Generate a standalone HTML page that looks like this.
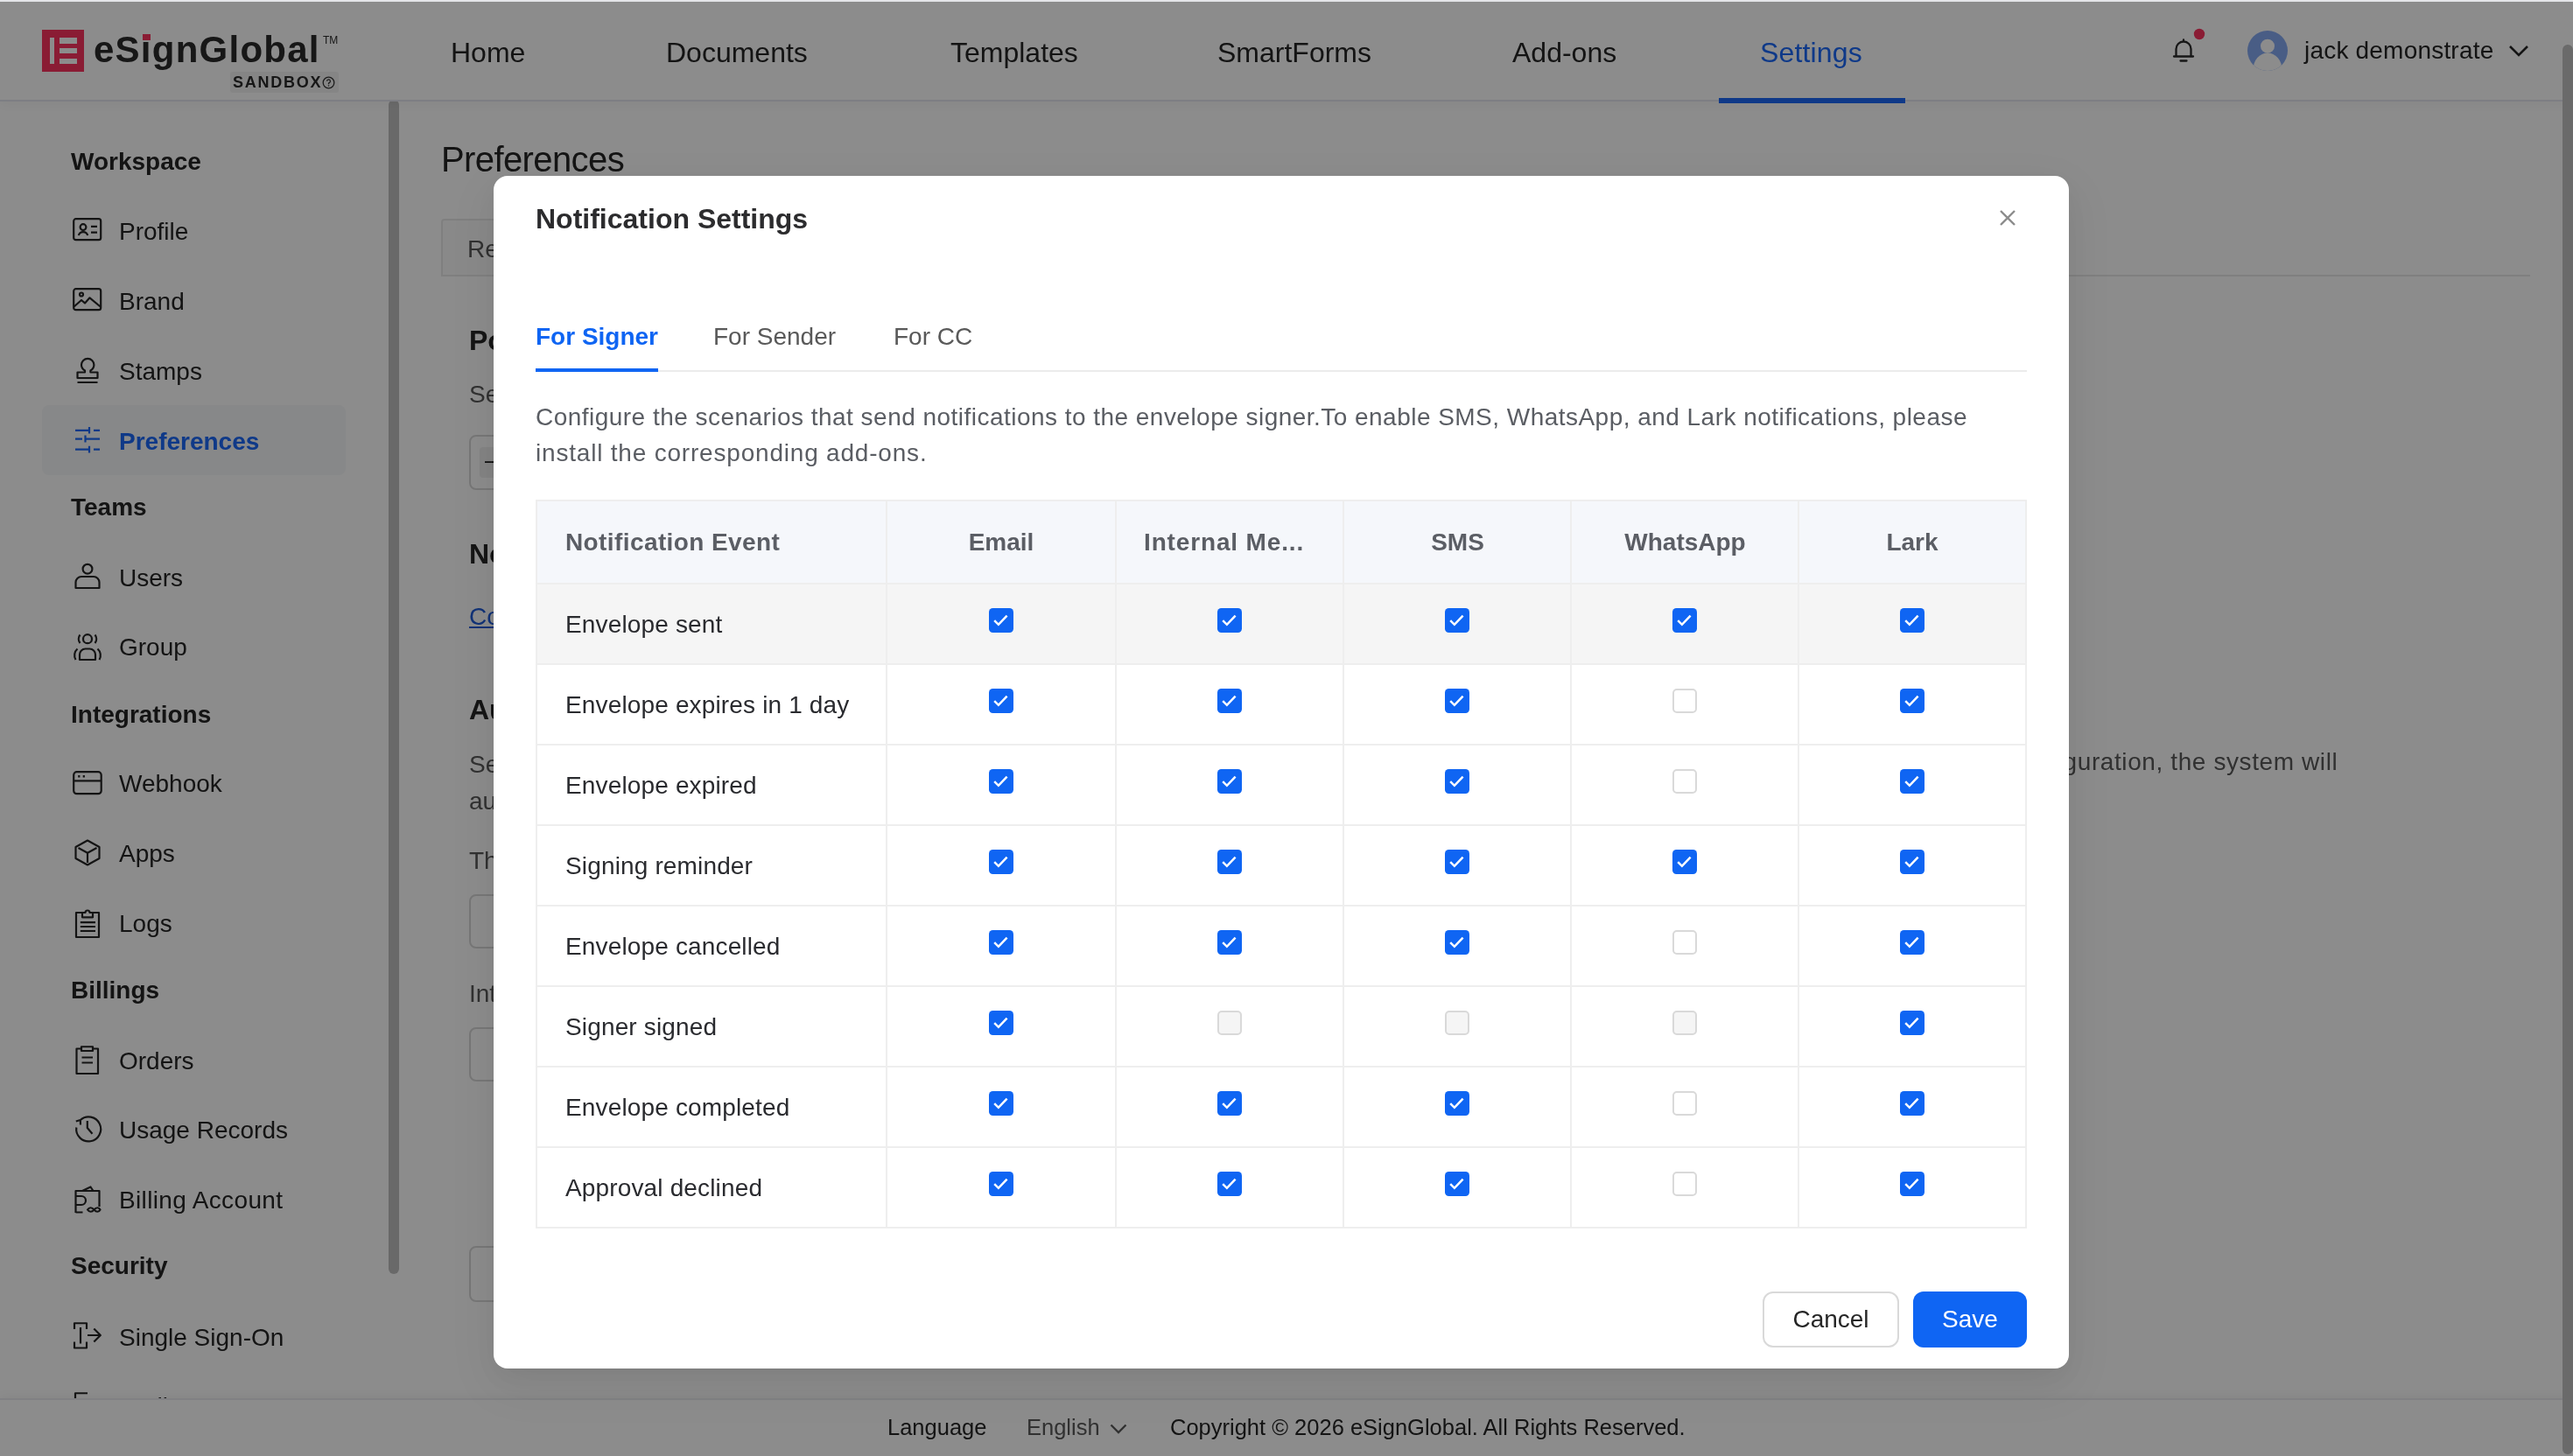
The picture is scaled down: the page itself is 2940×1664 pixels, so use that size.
<!DOCTYPE html><html><head><meta charset="utf-8"><style>
html,body{margin:0;padding:0;}
body{width:2940px;height:1664px;overflow:hidden;position:relative;background:#fff;font-family:"Liberation Sans",sans-serif;}
.t{position:absolute;line-height:1;white-space:nowrap;will-change:transform;}
.r{position:absolute;}
svg{position:absolute;overflow:visible;}
</style></head><body>
<div class="r" style="left:0px;top:0px;width:2940px;height:114px;background:#fff;box-shadow:0 2px 0 #e4e6ee, 0 4px 12px rgba(0,0,0,0.05);z-index:2;"></div>
<div style="position:absolute;left:0;top:0;width:2940px;height:120px;z-index:3;">
<div class="r" style="left:48px;top:34px;width:48px;height:48px;background:#fb3360;"></div>
<div class="r" style="left:57px;top:43px;width:5px;height:30px;background:#fff;"></div>
<div class="r" style="left:68px;top:43px;width:20px;height:6.5px;background:#fff;"></div>
<div class="r" style="left:68px;top:55px;width:20px;height:6px;background:#fff;"></div>
<div class="r" style="left:68px;top:66.5px;width:20px;height:6.5px;background:#fff;"></div>
<div class="t " style="left:107.0px;top:35.7px;font-size:42px;color:#2a2a2a;font-weight:700;letter-spacing:1.25px;">eS&#305;gnGlobal</div>
<div class="r" style="left:163px;top:38.7px;width:9px;height:7.3px;background:#fb3360;"></div>
<div class="t " style="left:369.0px;top:39.8px;font-size:12px;color:#2a2a2a;">TM</div>
<div class="r" style="left:263px;top:82px;width:124px;height:24px;background:#f3f3f3;border-radius:3px;"></div>
<div class="t " style="left:265.5px;top:85.3px;font-size:18px;color:#2a2a2a;font-weight:700;letter-spacing:1.75px;">SANDBOX</div>
<svg style="left:368px;top:87px" width="15" height="15" viewBox="0 0 15 15"><circle cx="7.5" cy="7.5" r="6.3" fill="none" stroke="#333" stroke-width="1.3"/><path d="M5.6 5.8a1.9 1.9 0 1 1 2.6 1.8c-.5.2-.7.5-.7 1v.6" fill="none" stroke="#333" stroke-width="1.3"/><circle cx="7.5" cy="11" r=".8" fill="#333"/></svg>
<div class="t " style="left:515.0px;top:44.3px;font-size:32px;color:#262626;">Home</div>
<div class="t " style="left:761.0px;top:44.3px;font-size:32px;color:#262626;">Documents</div>
<div class="t " style="left:1085.5px;top:44.3px;font-size:32px;color:#262626;">Templates</div>
<div class="t " style="left:1390.5px;top:44.3px;font-size:32px;color:#262626;">SmartForms</div>
<div class="t " style="left:1728.0px;top:44.3px;font-size:32px;color:#262626;">Add-ons</div>
<div class="t " style="left:2011.0px;top:44.3px;font-size:32px;color:#1c69f8;letter-spacing:0.15px;">Settings</div>
<div class="r" style="left:1964px;top:112px;width:213px;height:6px;background:#1c69f8;"></div>
<svg style="left:2483px;top:44px" width="24" height="28" viewBox="0 0 24 28"><path d="M3.5 20.5 V12 a8.5 8.5 0 0 1 17 0 V20.5 M1 20.5 H23 M12 1.5 V3.5 M8.5 25.5 H15.5" fill="none" stroke="#2b2b2b" stroke-width="2.3" stroke-linecap="round"/></svg>
<svg style="left:2506px;top:32px" width="14" height="14"><circle cx="7" cy="7" r="6.2" fill="#fb3360"/></svg>
<svg style="left:2567px;top:34px" width="48" height="48" viewBox="0 0 48 48"><defs><clipPath id="av"><circle cx="24" cy="24" r="23"/></clipPath></defs><circle cx="24" cy="24" r="23" fill="#86aaf2"/><g clip-path="url(#av)"><circle cx="24" cy="18.7" r="8" fill="#fff"/><ellipse cx="24" cy="45.5" rx="16.5" ry="19" fill="#fff"/></g></svg>
<div class="t " style="left:2632.5px;top:44.3px;font-size:28px;color:#262626;letter-spacing:0.2px;">jack demonstrate</div>
<svg style="left:2866px;top:50px" width="24" height="16"><path d="M2 3 L12 13 L22 3" fill="none" stroke="#262626" stroke-width="2.6"/></svg>
</div>
<div class="r" style="left:48px;top:463px;width:347px;height:80px;background:#f6f7f9;border-radius:8px;"></div>
<div class="t " style="left:80.5px;top:170.8px;font-size:28px;color:#262626;font-weight:700;">Workspace</div>
<div class="t " style="left:80.5px;top:566.3px;font-size:28px;color:#262626;font-weight:700;">Teams</div>
<div class="t " style="left:80.5px;top:802.8px;font-size:28px;color:#262626;font-weight:700;">Integrations</div>
<div class="t " style="left:80.5px;top:1118.3px;font-size:28px;color:#262626;font-weight:700;">Billings</div>
<div class="t " style="left:80.5px;top:1433.3px;font-size:28px;color:#262626;font-weight:700;">Security</div>
<svg style="left:83px;top:249px" width="36" height="36" viewBox="0 0 36 36"><g fill="none" stroke="#262626" stroke-width="2.2" stroke-linejoin="round"><rect x="1.2" y="1.2" width="31" height="24" rx="2.5"/><circle cx="12" cy="10.6" r="3.4"/><path d="M6.8 20 a5.4 5.4 0 0 1 10.4 0 M21 9.8 H28 M21 16.6 H28"/></g></svg>
<div class="t " style="left:135.5px;top:251.3px;font-size:28px;color:#262626;">Profile</div>
<svg style="left:83px;top:329px" width="36" height="36" viewBox="0 0 36 36"><g fill="none" stroke="#262626" stroke-width="2.2" stroke-linejoin="round"><rect x="1.2" y="1.2" width="31" height="24" rx="2.5"/><circle cx="10" cy="7.5" r="2"/><path d="M1.5 21.5 L10 14 L14 17.4 L19.5 11.3 L32.3 22"/></g></svg>
<div class="t " style="left:135.5px;top:331.3px;font-size:28px;color:#262626;">Brand</div>
<svg style="left:85px;top:408px" width="36" height="36" viewBox="0 0 36 36"><g fill="none" stroke="#262626" stroke-width="2.2" stroke-linejoin="round"><path d="M12 15.5 C9.2 13.8 8 11.5 8 9 a7.2 7.2 0 0 1 14.4 0 c0 2.5 -1.2 4.8 -4 6.5 V17.5 H26.5 V24 H3.5 V17.5 H12 Z M3.5 29 H26.5"/></g></svg>
<div class="t " style="left:135.5px;top:411.3px;font-size:28px;color:#262626;">Stamps</div>
<svg style="left:85px;top:488px" width="36" height="36" viewBox="0 0 36 36"><g fill="none" stroke="#1c69f8" stroke-width="2.2" stroke-linejoin="round"><path d="M1 3.8 H17 M22 3.8 H29 M17 0 V7.6 M1 13.6 H9 M12.5 13.6 H29 M12.5 9.6 V17.6 M1 25.6 H17 M22 25.6 H29 M17 21.8 V29.4"/></g></svg>
<div class="t " style="left:135.5px;top:491.3px;font-size:28px;color:#1c69f8;font-weight:700;">Preferences</div>
<svg style="left:85px;top:644px" width="36" height="36" viewBox="0 0 36 36"><g fill="none" stroke="#262626" stroke-width="2.2" stroke-linejoin="round"><circle cx="15" cy="6.2" r="5.4"/><path d="M1.5 28 V21.5 a6.5 6.5 0 0 1 6.5 -6.5 H22 a6.5 6.5 0 0 1 6.5 6.5 V28 Z"/></g></svg>
<div class="t " style="left:135.5px;top:647.3px;font-size:28px;color:#262626;">Users</div>
<svg style="left:85px;top:724px" width="36" height="36" viewBox="0 0 36 36"><g fill="none" stroke="#262626" stroke-width="2.2" stroke-linejoin="round"><circle cx="15" cy="6.2" r="5"/><path d="M6.5 1.5 a7.5 7.5 0 0 0 0 9.5 M23.5 1.5 a7.5 7.5 0 0 1 0 9.5 M6 30 V24 a6.5 6.5 0 0 1 6.5 -6.5 H17.5 a6.5 6.5 0 0 1 6.5 6.5 V30 Z M3.5 17.5 a10 10 0 0 0 -2 12.5 M26.5 17.5 a10 10 0 0 1 2 12.5"/></g></svg>
<div class="t " style="left:135.5px;top:726.3px;font-size:28px;color:#262626;">Group</div>
<svg style="left:83px;top:881px" width="36" height="36" viewBox="0 0 36 36"><g fill="none" stroke="#262626" stroke-width="2.2" stroke-linejoin="round"><rect x="1.2" y="1.2" width="31.5" height="25" rx="3.5"/><path d="M1.5 11.4 H32.5"/><path d="M6.2 6.2 H8.4 M11.7 6.2 H13.9" stroke-width="2.6"/></g></svg>
<div class="t " style="left:135.5px;top:882.3px;font-size:28px;color:#262626;">Webhook</div>
<svg style="left:85px;top:959px" width="36" height="36" viewBox="0 0 36 36"><g fill="none" stroke="#262626" stroke-width="2.2" stroke-linejoin="round"><path d="M15 1.5 L28.5 9 V22 L15 29.5 L1.5 22 V9 Z M4.5 10 L15 15.8 L25.5 10 M15 15.8 V27"/></g></svg>
<div class="t " style="left:135.5px;top:962.3px;font-size:28px;color:#262626;">Apps</div>
<svg style="left:85px;top:1037px" width="36" height="36" viewBox="0 0 36 36"><g fill="none" stroke="#262626" stroke-width="2.2" stroke-linejoin="round"><path d="M8.5 6 H2 V34 H28 V6 H21.5 M9 11.3 V6 H12.5 a2.5 2.5 0 0 1 5 0 H21 V11.3 Z"/><path d="M6.8 17.2 H24 M6.8 22 H24 M6.8 27 H24"/></g></svg>
<div class="t " style="left:135.5px;top:1042.3px;font-size:28px;color:#262626;">Logs</div>
<svg style="left:86px;top:1195px" width="36" height="36" viewBox="0 0 36 36"><g fill="none" stroke="#262626" stroke-width="2.2" stroke-linejoin="round"><path d="M7 3.5 H1.5 V32 H26 V3.5 H20.5 M7 1.25 V6 H20 V1.25 Z M7.5 13.5 H20 M7.5 19.5 H20"/></g></svg>
<div class="t " style="left:135.5px;top:1198.8px;font-size:28px;color:#262626;">Orders</div>
<svg style="left:85px;top:1276px" width="36" height="36" viewBox="0 0 36 36"><g fill="none" stroke="#262626" stroke-width="2.2" stroke-linejoin="round"><path d="M2.3 12.5 a14 14 0 1 0 4.5 -8.5 M1.8 5.5 L6.8 4 L7 9.5 M14.8 5 V13 L20.5 19.8"/></g></svg>
<div class="t " style="left:135.5px;top:1278.3px;font-size:28px;color:#262626;">Usage Records</div>
<svg style="left:85px;top:1355px" width="36" height="36" viewBox="0 0 36 36"><g fill="none" stroke="#262626" stroke-width="2.2" stroke-linejoin="round"><path d="M28.5 24 V6 H9 M1.5 31 V6 H9 L18.5 1.5 L21.5 6 M1.5 12 H8 a5 5 0 0 1 0 10 H1.5 M1.5 30.5 H9.5 M15 27.5 c2 -3 5 -3 7.5 0 c2.5 3 5.5 3 7 0 c-1.5 -3 -4.5 -3 -7 0 c-2.5 3 -5.5 3 -7.5 0 Z"/></g></svg>
<div class="t " style="left:135.5px;top:1358.3px;font-size:28px;color:#262626;letter-spacing:0.35px;">Billing Account</div>
<svg style="left:85px;top:1511px" width="36" height="36" viewBox="0 0 36 36"><g fill="none" stroke="#262626" stroke-width="2.2" stroke-linejoin="round"><path d="M0 8 V1.25 H14 V8 M0 22.5 V29.5 H14 V22.5 M7 6 V24.5 M15 15 H29.5 M22.3 7.5 L29.8 15 L22.3 22.5"/></g></svg>
<div class="t " style="left:135.5px;top:1514.9px;font-size:28px;color:#262626;">Single Sign-On</div>
<svg style="left:85px;top:1591px" width="36" height="36" viewBox="0 0 36 36"><g fill="none" stroke="#262626" stroke-width="2.2" stroke-linejoin="round"><path d="M1 8 V1.25 H15"/></g></svg>
<div class="t " style="left:135.5px;top:1594.3px;font-size:28px;color:#262626;">Audit Logs</div>
<div class="r" style="left:444px;top:114px;width:12px;height:1342px;background:#c0c0c0;border-radius:6px;"></div>
<div class="t " style="left:504.0px;top:162.1px;font-size:40px;color:#262626;letter-spacing:-0.6px;">Preferences</div>
<div class="r" style="left:504px;top:250px;width:400px;height:66px;background:#fafafa;border:2px solid #e8e8e8;border-bottom:none;border-radius:4px 4px 0 0;box-sizing:border-box;"></div>
<div class="r" style="left:504px;top:314px;width:2387px;height:2px;background:#e8e8e8;"></div>
<div class="t " style="left:534.0px;top:271.0px;font-size:28px;color:#595959;">Reminders</div>
<div class="t " style="left:536.0px;top:373.3px;font-size:32px;color:#262626;font-weight:700;">Policies</div>
<div class="t " style="left:536.0px;top:436.6px;font-size:28px;color:#595959;">Set policies</div>
<div class="r" style="left:536px;top:497px;width:600px;height:63px;background:#fff;border:2px solid #d9d9d9;border-radius:8px;box-sizing:border-box;"></div>
<div class="r" style="left:548px;top:511px;width:120px;height:35px;background:#f0f0f0;border-radius:4px;"></div>
<div class="t " style="left:554.0px;top:512.3px;font-size:28px;color:#262626;">&#8211;</div>
<div class="t " style="left:536.0px;top:616.9px;font-size:32px;color:#262626;font-weight:700;">Notifications</div>
<div class="t " style="left:536.0px;top:691.3px;font-size:28px;color:#1f5bd8;text-decoration:underline;">Configure</div>
<div class="t " style="left:536.0px;top:794.6px;font-size:32px;color:#262626;font-weight:700;">Auto reminders</div>
<div class="t " style="left:536.0px;top:860.0px;font-size:28px;color:#595959;">Set</div>
<div class="t" style="right:269px;top:857.3px;font-size:28px;color:#595959;letter-spacing:0.6px;">After completing the configuration, the system will</div>
<div class="t " style="left:536.0px;top:902.3px;font-size:28px;color:#595959;">automatically</div>
<div class="t " style="left:536.0px;top:969.8px;font-size:28px;color:#595959;">The</div>
<div class="r" style="left:536px;top:1022px;width:600px;height:62px;background:#fff;border:2px solid #d9d9d9;border-radius:8px;box-sizing:border-box;"></div>
<div class="t " style="left:536.0px;top:1121.9px;font-size:28px;color:#595959;">Interval</div>
<div class="r" style="left:536px;top:1174px;width:600px;height:62px;background:#fff;border:2px solid #d9d9d9;border-radius:8px;box-sizing:border-box;"></div>
<div class="r" style="left:536px;top:1424px;width:600px;height:64px;background:#fff;border:2px solid #d9d9d9;border-radius:8px;box-sizing:border-box;"></div>
<div class="r" style="left:0px;top:1600px;width:2940px;height:64px;background:#fff;box-shadow:0 -2px 0 #e9eaee, 0 -4px 10px rgba(0,0,0,0.05);z-index:4;"></div>
<div style="position:absolute;left:0;top:1590px;width:2940px;height:74px;z-index:5;">
<div class="t " style="left:1013.5px;top:29.4px;font-size:25.5px;color:#262626;">Language</div>
<div class="t " style="left:1172.5px;top:29.4px;font-size:25.5px;color:#595959;">English</div>
<svg style="left:1268px;top:37px" width="20" height="12"><path d="M1.5 1.5 L10 10 L18.5 1.5" fill="none" stroke="#595959" stroke-width="2.3"/></svg>
<div class="t " style="left:1336.5px;top:29.4px;font-size:25.5px;color:#262626;">Copyright &#169; 2026 eSignGlobal. All Rights Reserved.</div>
</div>
<div class="r" style="left:0px;top:0px;width:2940px;height:1664px;background:rgba(0,0,0,0.45);z-index:10;"></div>
<div class="r" style="left:0px;top:0px;width:2940px;height:2px;background:#e4e5e8;z-index:11;"></div>
<div class="r" style="left:2928px;top:51px;width:12px;height:1611px;background:#6a6a6a;border-radius:6px;z-index:11;"></div>
<div style="position:absolute;left:564px;top:201px;width:1800px;height:1363px;background:#fff;border-radius:16px;z-index:20;box-shadow:0 12px 32px rgba(0,0,0,.05),0 6px 12px -8px rgba(0,0,0,.06),0 18px 56px 16px rgba(0,0,0,.05);"></div>
<div style="position:absolute;left:0;top:0;width:2940px;height:1664px;z-index:21;">
<div class="t " style="left:612.0px;top:233.6px;font-size:32px;color:#2c2c2e;font-weight:700;">Notification Settings</div>
<svg style="left:2285px;top:240px" width="18" height="18"><path d="M1 1 L17 17 M17 1 L1 17" stroke="#8c8c8c" stroke-width="2.4"/></svg>
<div class="t " style="left:612.0px;top:370.9px;font-size:28px;color:#0f65f3;font-weight:700;">For Signer</div>
<div class="t " style="left:815.0px;top:370.9px;font-size:28px;color:#595959;">For Sender</div>
<div class="t " style="left:1021.0px;top:370.9px;font-size:28px;color:#595959;">For CC</div>
<div class="r" style="left:612px;top:423px;width:1704px;height:2px;background:#ececec;"></div>
<div class="r" style="left:612px;top:421px;width:140px;height:4px;background:#0f65f3;"></div>
<div class="t " style="left:612.0px;top:462.9px;font-size:28px;color:#5a5d63;letter-spacing:0.47px;">Configure the scenarios that send notifications to the envelope signer.To enable SMS, WhatsApp, and Lark notifications, please</div>
<div class="t " style="left:612.0px;top:504.3px;font-size:28px;color:#5a5d63;letter-spacing:0.8px;">install the corresponding add-ons.</div>
<div class="r" style="left:614px;top:573px;width:1700px;height:93px;background:#f5f7fb;"></div>
<div class="r" style="left:614px;top:668px;width:1700px;height:90px;background:#f5f5f5;"></div>
<div class="r" style="left:612px;top:571px;width:1704px;height:2px;background:#eeeeee;"></div>
<div class="r" style="left:612px;top:666px;width:1704px;height:2px;background:#eeeeee;"></div>
<div class="r" style="left:612px;top:758px;width:1704px;height:2px;background:#eeeeee;"></div>
<div class="r" style="left:612px;top:850px;width:1704px;height:2px;background:#eeeeee;"></div>
<div class="r" style="left:612px;top:942px;width:1704px;height:2px;background:#eeeeee;"></div>
<div class="r" style="left:612px;top:1034px;width:1704px;height:2px;background:#eeeeee;"></div>
<div class="r" style="left:612px;top:1126px;width:1704px;height:2px;background:#eeeeee;"></div>
<div class="r" style="left:612px;top:1218px;width:1704px;height:2px;background:#eeeeee;"></div>
<div class="r" style="left:612px;top:1310px;width:1704px;height:2px;background:#eeeeee;"></div>
<div class="r" style="left:612px;top:1402px;width:1704px;height:2px;background:#eeeeee;"></div>
<div class="r" style="left:612px;top:571px;width:2px;height:833px;background:#eeeeee;"></div>
<div class="r" style="left:1012px;top:571px;width:2px;height:833px;background:#eeeeee;"></div>
<div class="r" style="left:1274px;top:571px;width:2px;height:833px;background:#eeeeee;"></div>
<div class="r" style="left:1534px;top:571px;width:2px;height:833px;background:#eeeeee;"></div>
<div class="r" style="left:1794px;top:571px;width:2px;height:833px;background:#eeeeee;"></div>
<div class="r" style="left:2054px;top:571px;width:2px;height:833px;background:#eeeeee;"></div>
<div class="r" style="left:2314px;top:571px;width:2px;height:833px;background:#eeeeee;"></div>
<div class="t " style="left:646.0px;top:606.2px;font-size:28px;color:#5b5e65;font-weight:700;letter-spacing:0.4px;">Notification Event</div>
<div class="t" style="left:1014px;width:260px;text-align:center;top:606.2px;font-size:28px;font-weight:700;color:#5b5e65;">Email</div>
<div class="t " style="left:1307.0px;top:606.2px;font-size:28px;color:#5b5e65;font-weight:700;letter-spacing:0.85px;">Internal Me...</div>
<div class="t" style="left:1536px;width:259px;text-align:center;top:606.2px;font-size:28px;font-weight:700;color:#5b5e65;">SMS</div>
<div class="t" style="left:1797px;width:257px;text-align:center;top:606.2px;font-size:28px;font-weight:700;color:#5b5e65;">WhatsApp</div>
<div class="t" style="left:2056px;width:258px;text-align:center;top:606.2px;font-size:28px;font-weight:700;color:#5b5e65;">Lark</div>
<div class="t " style="left:646.0px;top:699.6px;font-size:28px;color:#2a2b2f;letter-spacing:0.15px;">Envelope sent</div>
<svg style="left:1130px;top:695px" width="28" height="28" viewBox="0 0 28 28"><rect x="0" y="0" width="28" height="28" rx="4.5" fill="#0f65f3"/><path d="M6.2 14.1 L10.9 18.8 L20.6 8.6" fill="none" stroke="#fff" stroke-width="2.5"/></svg>
<svg style="left:1391px;top:695px" width="28" height="28" viewBox="0 0 28 28"><rect x="0" y="0" width="28" height="28" rx="4.5" fill="#0f65f3"/><path d="M6.2 14.1 L10.9 18.8 L20.6 8.6" fill="none" stroke="#fff" stroke-width="2.5"/></svg>
<svg style="left:1651px;top:695px" width="28" height="28" viewBox="0 0 28 28"><rect x="0" y="0" width="28" height="28" rx="4.5" fill="#0f65f3"/><path d="M6.2 14.1 L10.9 18.8 L20.6 8.6" fill="none" stroke="#fff" stroke-width="2.5"/></svg>
<svg style="left:1911px;top:695px" width="28" height="28" viewBox="0 0 28 28"><rect x="0" y="0" width="28" height="28" rx="4.5" fill="#0f65f3"/><path d="M6.2 14.1 L10.9 18.8 L20.6 8.6" fill="none" stroke="#fff" stroke-width="2.5"/></svg>
<svg style="left:2171px;top:695px" width="28" height="28" viewBox="0 0 28 28"><rect x="0" y="0" width="28" height="28" rx="4.5" fill="#0f65f3"/><path d="M6.2 14.1 L10.9 18.8 L20.6 8.6" fill="none" stroke="#fff" stroke-width="2.5"/></svg>
<div class="t " style="left:646.0px;top:791.6px;font-size:28px;color:#2a2b2f;letter-spacing:0.15px;">Envelope expires in 1 day</div>
<svg style="left:1130px;top:787px" width="28" height="28" viewBox="0 0 28 28"><rect x="0" y="0" width="28" height="28" rx="4.5" fill="#0f65f3"/><path d="M6.2 14.1 L10.9 18.8 L20.6 8.6" fill="none" stroke="#fff" stroke-width="2.5"/></svg>
<svg style="left:1391px;top:787px" width="28" height="28" viewBox="0 0 28 28"><rect x="0" y="0" width="28" height="28" rx="4.5" fill="#0f65f3"/><path d="M6.2 14.1 L10.9 18.8 L20.6 8.6" fill="none" stroke="#fff" stroke-width="2.5"/></svg>
<svg style="left:1651px;top:787px" width="28" height="28" viewBox="0 0 28 28"><rect x="0" y="0" width="28" height="28" rx="4.5" fill="#0f65f3"/><path d="M6.2 14.1 L10.9 18.8 L20.6 8.6" fill="none" stroke="#fff" stroke-width="2.5"/></svg>
<div class="r" style="left:1911px;top:787px;width:28px;height:28px;background:#fff;border:2px solid #d9d9d9;border-radius:5px;box-sizing:border-box;"></div>
<svg style="left:2171px;top:787px" width="28" height="28" viewBox="0 0 28 28"><rect x="0" y="0" width="28" height="28" rx="4.5" fill="#0f65f3"/><path d="M6.2 14.1 L10.9 18.8 L20.6 8.6" fill="none" stroke="#fff" stroke-width="2.5"/></svg>
<div class="t " style="left:646.0px;top:883.6px;font-size:28px;color:#2a2b2f;letter-spacing:0.15px;">Envelope expired</div>
<svg style="left:1130px;top:879px" width="28" height="28" viewBox="0 0 28 28"><rect x="0" y="0" width="28" height="28" rx="4.5" fill="#0f65f3"/><path d="M6.2 14.1 L10.9 18.8 L20.6 8.6" fill="none" stroke="#fff" stroke-width="2.5"/></svg>
<svg style="left:1391px;top:879px" width="28" height="28" viewBox="0 0 28 28"><rect x="0" y="0" width="28" height="28" rx="4.5" fill="#0f65f3"/><path d="M6.2 14.1 L10.9 18.8 L20.6 8.6" fill="none" stroke="#fff" stroke-width="2.5"/></svg>
<svg style="left:1651px;top:879px" width="28" height="28" viewBox="0 0 28 28"><rect x="0" y="0" width="28" height="28" rx="4.5" fill="#0f65f3"/><path d="M6.2 14.1 L10.9 18.8 L20.6 8.6" fill="none" stroke="#fff" stroke-width="2.5"/></svg>
<div class="r" style="left:1911px;top:879px;width:28px;height:28px;background:#fff;border:2px solid #d9d9d9;border-radius:5px;box-sizing:border-box;"></div>
<svg style="left:2171px;top:879px" width="28" height="28" viewBox="0 0 28 28"><rect x="0" y="0" width="28" height="28" rx="4.5" fill="#0f65f3"/><path d="M6.2 14.1 L10.9 18.8 L20.6 8.6" fill="none" stroke="#fff" stroke-width="2.5"/></svg>
<div class="t " style="left:646.0px;top:975.6px;font-size:28px;color:#2a2b2f;letter-spacing:0.15px;">Signing reminder</div>
<svg style="left:1130px;top:971px" width="28" height="28" viewBox="0 0 28 28"><rect x="0" y="0" width="28" height="28" rx="4.5" fill="#0f65f3"/><path d="M6.2 14.1 L10.9 18.8 L20.6 8.6" fill="none" stroke="#fff" stroke-width="2.5"/></svg>
<svg style="left:1391px;top:971px" width="28" height="28" viewBox="0 0 28 28"><rect x="0" y="0" width="28" height="28" rx="4.5" fill="#0f65f3"/><path d="M6.2 14.1 L10.9 18.8 L20.6 8.6" fill="none" stroke="#fff" stroke-width="2.5"/></svg>
<svg style="left:1651px;top:971px" width="28" height="28" viewBox="0 0 28 28"><rect x="0" y="0" width="28" height="28" rx="4.5" fill="#0f65f3"/><path d="M6.2 14.1 L10.9 18.8 L20.6 8.6" fill="none" stroke="#fff" stroke-width="2.5"/></svg>
<svg style="left:1911px;top:971px" width="28" height="28" viewBox="0 0 28 28"><rect x="0" y="0" width="28" height="28" rx="4.5" fill="#0f65f3"/><path d="M6.2 14.1 L10.9 18.8 L20.6 8.6" fill="none" stroke="#fff" stroke-width="2.5"/></svg>
<svg style="left:2171px;top:971px" width="28" height="28" viewBox="0 0 28 28"><rect x="0" y="0" width="28" height="28" rx="4.5" fill="#0f65f3"/><path d="M6.2 14.1 L10.9 18.8 L20.6 8.6" fill="none" stroke="#fff" stroke-width="2.5"/></svg>
<div class="t " style="left:646.0px;top:1067.6px;font-size:28px;color:#2a2b2f;letter-spacing:0.15px;">Envelope cancelled</div>
<svg style="left:1130px;top:1063px" width="28" height="28" viewBox="0 0 28 28"><rect x="0" y="0" width="28" height="28" rx="4.5" fill="#0f65f3"/><path d="M6.2 14.1 L10.9 18.8 L20.6 8.6" fill="none" stroke="#fff" stroke-width="2.5"/></svg>
<svg style="left:1391px;top:1063px" width="28" height="28" viewBox="0 0 28 28"><rect x="0" y="0" width="28" height="28" rx="4.5" fill="#0f65f3"/><path d="M6.2 14.1 L10.9 18.8 L20.6 8.6" fill="none" stroke="#fff" stroke-width="2.5"/></svg>
<svg style="left:1651px;top:1063px" width="28" height="28" viewBox="0 0 28 28"><rect x="0" y="0" width="28" height="28" rx="4.5" fill="#0f65f3"/><path d="M6.2 14.1 L10.9 18.8 L20.6 8.6" fill="none" stroke="#fff" stroke-width="2.5"/></svg>
<div class="r" style="left:1911px;top:1063px;width:28px;height:28px;background:#fff;border:2px solid #d9d9d9;border-radius:5px;box-sizing:border-box;"></div>
<svg style="left:2171px;top:1063px" width="28" height="28" viewBox="0 0 28 28"><rect x="0" y="0" width="28" height="28" rx="4.5" fill="#0f65f3"/><path d="M6.2 14.1 L10.9 18.8 L20.6 8.6" fill="none" stroke="#fff" stroke-width="2.5"/></svg>
<div class="t " style="left:646.0px;top:1159.6px;font-size:28px;color:#2a2b2f;letter-spacing:0.15px;">Signer signed</div>
<svg style="left:1130px;top:1155px" width="28" height="28" viewBox="0 0 28 28"><rect x="0" y="0" width="28" height="28" rx="4.5" fill="#0f65f3"/><path d="M6.2 14.1 L10.9 18.8 L20.6 8.6" fill="none" stroke="#fff" stroke-width="2.5"/></svg>
<div class="r" style="left:1391px;top:1155px;width:28px;height:28px;background:#f5f5f5;border:2px solid #d9d9d9;border-radius:5px;box-sizing:border-box;"></div>
<div class="r" style="left:1651px;top:1155px;width:28px;height:28px;background:#f5f5f5;border:2px solid #d9d9d9;border-radius:5px;box-sizing:border-box;"></div>
<div class="r" style="left:1911px;top:1155px;width:28px;height:28px;background:#f5f5f5;border:2px solid #d9d9d9;border-radius:5px;box-sizing:border-box;"></div>
<svg style="left:2171px;top:1155px" width="28" height="28" viewBox="0 0 28 28"><rect x="0" y="0" width="28" height="28" rx="4.5" fill="#0f65f3"/><path d="M6.2 14.1 L10.9 18.8 L20.6 8.6" fill="none" stroke="#fff" stroke-width="2.5"/></svg>
<div class="t " style="left:646.0px;top:1251.6px;font-size:28px;color:#2a2b2f;letter-spacing:0.15px;">Envelope completed</div>
<svg style="left:1130px;top:1247px" width="28" height="28" viewBox="0 0 28 28"><rect x="0" y="0" width="28" height="28" rx="4.5" fill="#0f65f3"/><path d="M6.2 14.1 L10.9 18.8 L20.6 8.6" fill="none" stroke="#fff" stroke-width="2.5"/></svg>
<svg style="left:1391px;top:1247px" width="28" height="28" viewBox="0 0 28 28"><rect x="0" y="0" width="28" height="28" rx="4.5" fill="#0f65f3"/><path d="M6.2 14.1 L10.9 18.8 L20.6 8.6" fill="none" stroke="#fff" stroke-width="2.5"/></svg>
<svg style="left:1651px;top:1247px" width="28" height="28" viewBox="0 0 28 28"><rect x="0" y="0" width="28" height="28" rx="4.5" fill="#0f65f3"/><path d="M6.2 14.1 L10.9 18.8 L20.6 8.6" fill="none" stroke="#fff" stroke-width="2.5"/></svg>
<div class="r" style="left:1911px;top:1247px;width:28px;height:28px;background:#fff;border:2px solid #d9d9d9;border-radius:5px;box-sizing:border-box;"></div>
<svg style="left:2171px;top:1247px" width="28" height="28" viewBox="0 0 28 28"><rect x="0" y="0" width="28" height="28" rx="4.5" fill="#0f65f3"/><path d="M6.2 14.1 L10.9 18.8 L20.6 8.6" fill="none" stroke="#fff" stroke-width="2.5"/></svg>
<div class="t " style="left:646.0px;top:1343.6px;font-size:28px;color:#2a2b2f;letter-spacing:0.15px;">Approval declined</div>
<svg style="left:1130px;top:1339px" width="28" height="28" viewBox="0 0 28 28"><rect x="0" y="0" width="28" height="28" rx="4.5" fill="#0f65f3"/><path d="M6.2 14.1 L10.9 18.8 L20.6 8.6" fill="none" stroke="#fff" stroke-width="2.5"/></svg>
<svg style="left:1391px;top:1339px" width="28" height="28" viewBox="0 0 28 28"><rect x="0" y="0" width="28" height="28" rx="4.5" fill="#0f65f3"/><path d="M6.2 14.1 L10.9 18.8 L20.6 8.6" fill="none" stroke="#fff" stroke-width="2.5"/></svg>
<svg style="left:1651px;top:1339px" width="28" height="28" viewBox="0 0 28 28"><rect x="0" y="0" width="28" height="28" rx="4.5" fill="#0f65f3"/><path d="M6.2 14.1 L10.9 18.8 L20.6 8.6" fill="none" stroke="#fff" stroke-width="2.5"/></svg>
<div class="r" style="left:1911px;top:1339px;width:28px;height:28px;background:#fff;border:2px solid #d9d9d9;border-radius:5px;box-sizing:border-box;"></div>
<svg style="left:2171px;top:1339px" width="28" height="28" viewBox="0 0 28 28"><rect x="0" y="0" width="28" height="28" rx="4.5" fill="#0f65f3"/><path d="M6.2 14.1 L10.9 18.8 L20.6 8.6" fill="none" stroke="#fff" stroke-width="2.5"/></svg>
<div class="r" style="left:2014px;top:1476px;width:156px;height:64px;background:#fff;border:2px solid #d9d9d9;border-radius:12px;box-sizing:border-box;"></div>
<div class="t" style="left:2014px;width:156px;text-align:center;top:1493.7px;font-size:28px;color:#262626;">Cancel</div>
<div class="r" style="left:2186px;top:1476px;width:130px;height:64px;background:#0f65f3;border-radius:12px;"></div>
<div class="t" style="left:2186px;width:130px;text-align:center;top:1493.7px;font-size:28px;color:#fff;">Save</div>
</div>
</body></html>
